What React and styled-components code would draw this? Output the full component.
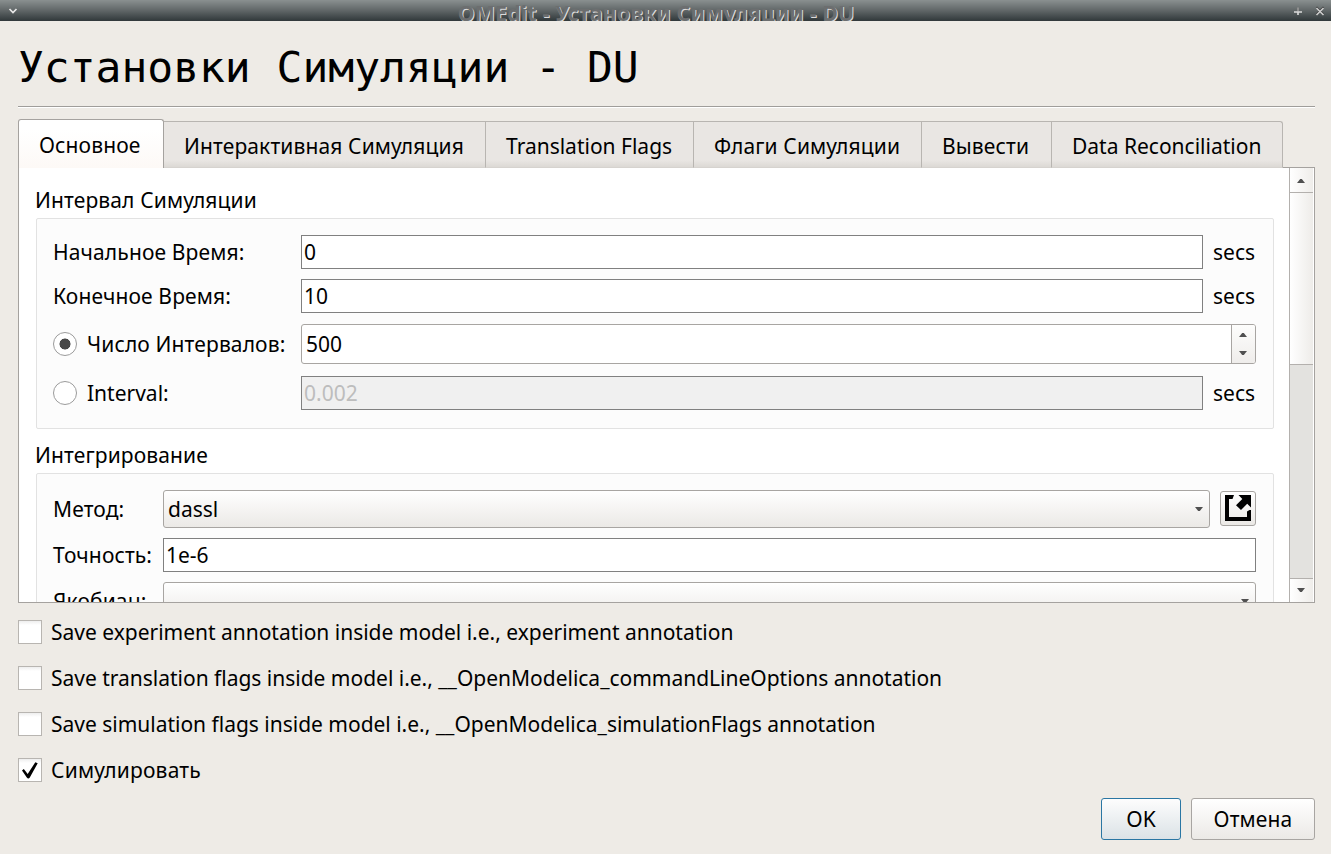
import React from "react";
import styled, { createGlobalStyle, css } from "styled-components";

const GlobalStyle = createGlobalStyle`
  * { box-sizing: border-box; }
  body { margin: 0; background: #eeebe6; }
`;

const Dialog = styled.div`
  width: 1331px;
  height: 854px;
  overflow: hidden;
  display: flex;
  flex-direction: column;
  background: #eeebe6;
  color: #000;
  font-family: "Noto Sans", sans-serif;
  font-size: 21px;
  line-height: 30px;
  white-space: nowrap;

  :lang(ru) { letter-spacing: 0.13px; }
`;

const TitleBar = styled.header`
  flex: none;
  height: 21px;
  display: flex;
  align-items: center;
  padding: 0 6px 0 8px;
  overflow: hidden;
  background: linear-gradient(#8a9090, #606667 50%, #30383a);
`;

const TitleText = styled.div`
  flex: 1;
  height: 21px;
  padding-left: 1px;
  font-size: 21.33px;
  font-weight: 700;
  letter-spacing: 0.15px;
  line-height: 25px;
  text-align: center;
  color: #6c6e6f;
  text-shadow: 1px 1px 0 #dcdcdc;
`;

const WindowButtons = styled.div`
  display: flex;
  gap: 12px;
`;

const Content = styled.main`
  flex: 1;
  display: flex;
  flex-direction: column;
  padding: 19px 16px 14px 18px;
`;

const Heading = styled.h1`
  flex: none;
  margin: 0;
  height: 67px;
  font: 400 43px/54px "DejaVu Sans Mono", monospace;
  border-bottom: 1px solid #9f9d9a;
  box-shadow: 0 1px 0 #fff;

  &:lang(ru) { letter-spacing: -0.03px; }
`;

const TabBar = styled.nav`
  flex: none;
  display: flex;
  align-items: flex-end;
  height: 49px;
  margin: 12px 0 -1px;
  position: relative;
  z-index: 1;
`;

const Tab = styled.div`
  width: ${(p) => p.$width}px;
  height: 47px;
  padding-left: 20px;
  line-height: 48px;
  border: 1px solid #b8b5b1;
  border-left: 0;
  border-bottom-color: #d6d3cf;
  background: linear-gradient(#e9e6e3 85%, #dcd9d5);
  &:last-child { border-radius: 0 3px 0 0; }
  ${(p) =>
    p.$active &&
    css`
      height: 49px;
      line-height: 50px;
      border: 1px solid #a5a29f;
      border-bottom: 0;
      border-radius: 3px 3px 0 0;
      background: linear-gradient(#fff 20%, #fdf9f6);
    `}
`;

const Panel = styled.section`
  flex: none;
  height: 436px;
  display: flex;
  border: 1px solid #a5a29f;
  background: #fff;
  overflow: hidden;
`;

const ScrollArea = styled.div`
  flex: 1;
  overflow: hidden;
  padding: 15px 15px 0 17px;
`;

const GroupTitle = styled.h2`
  margin: 0 0 0 -1px;
  height: ${(p) => p.$height}px;
  padding-top: ${(p) => p.$top}px;
  font: inherit;
`;

const GroupBox = styled.div`
  display: flex;
  flex-direction: column;
  gap: 10px;
  height: 211px;
  padding: 16px 17px 0 16px;
  margin-bottom: 10px;
  border: 1px solid #e2e2e2;
  border-radius: 2px;
  background: #fcfcfc;
`;

const Row = styled.div`
  display: flex;
  align-items: center;
  flex: none;
  margin-top: ${(p) => p.$top || 0}px;
`;

const Label = styled.label`
  flex: none;
  display: flex;
  align-items: center;
  gap: 10px;
  width: ${(p) => p.$width}px;
`;

const Radio = styled.span`
  width: 24px;
  height: 24px;
  border: 1px solid #9b9b9b;
  border-radius: 50%;
  background: ${(p) =>
    p.$checked ? "radial-gradient(circle, #484848 5.2px, #fff 5.8px)" : "#fff"};
`;

const Field = styled.div`
  flex: 1;
  height: 34px;
  padding-left: 2px;
  line-height: 32px;
  border: 1px solid #808080;
  background: ${(p) => (p.$disabled ? "#f0f0f0" : "#fff")};
  color: ${(p) => (p.$disabled ? "#bdbdbd" : "inherit")};
`;

const Unit = styled.span`
  width: 43px;
  margin-left: 10px;
`;

const SpinBox = styled.div`
  flex: 1;
  display: flex;
  height: 40px;
  padding-left: 4px;
  line-height: 38px;
  border: 1px solid #a8a5a2;
  border-radius: 3px;
  background: #fff;
`;

const SpinButtons = styled.div`
  width: 24px;
  margin-left: auto;
  display: flex;
  flex-direction: column;
  align-items: center;
  justify-content: center;
  gap: 14px;
  padding-right: 1px;
  border-left: 1px solid #a8a5a2;
  border-radius: 0 2px 2px 0;
  background: linear-gradient(#fdfdfc, #efedeb);
`;

const Arrow = styled.i`
  width: 8px;
  height: 4px;
  background: #505050;
  clip-path: ${(p) =>
    p.$up
      ? "polygon(40% 0, 60% 0, 100% 100%, 0 100%)"
      : "polygon(0 0, 100% 0, 60% 100%, 40% 100%)"};
`;

const raised = css`
  border: 1px solid #a8a5a2;
  border-radius: 3px;
  background: linear-gradient(#fff, #ebe9e6);
`;

const ComboBox = styled.div`
  ${raised}
  flex: 1;
  display: flex;
  align-items: center;
  justify-content: space-between;
  height: 38px;
  padding: 0 6px 0 4px;
`;

const ToolButton = styled.button`
  ${raised}
  width: 36px;
  height: 35px;
  margin: 0 0 1px 10px;
  padding: 3px 0 0 4px;
  display: flex;
`;

const ScrollBar = styled.div`
  width: 25px;
  display: flex;
  flex-direction: column;
  padding-right: 1px;
  border-left: 1px solid #b3b0ad;
`;

const ScrollButton = styled.div`
  height: ${(p) => p.$height}px;
  display: flex;
  align-items: center;
  justify-content: center;
  padding: ${(p) => (p.$up ? "2px 1px 0 0" : "0 1px 1px 0")};
  background: linear-gradient(90deg, #fff, #efedea);
`;

const ScrollThumb = styled.div`
  height: 173px;
  border: solid #b3b0ad;
  border-width: 1px 0;
  background: linear-gradient(90deg, #fff, #eeece9);
`;

const ScrollTrack = styled.div`
  flex: 1;
  border-bottom: 1px solid #b3b0ad;
  background: #e3e2df;
`;

const Options = styled.div`
  display: flex;
  flex-direction: column;
  gap: 16px;
  padding-top: 14px;
`;

const Option = styled.label`
  display: flex;
  align-items: center;
  gap: 9px;
  height: 30px;
  letter-spacing: -0.012px;

  &:lang(ru) { letter-spacing: 0.22px; }
`;

const CheckBox = styled.span`
  width: 24px;
  height: 24px;
  border: 1px solid #b8b5b1;
  background: linear-gradient(#eee, #fff 4px);
`;

const CheckMark = styled.svg`
  display: block;
`;

const Footer = styled.footer`
  display: flex;
  justify-content: flex-end;
  gap: 10px;
  margin-top: auto;
`;

const Button = styled.button`
  ${raised}
  width: ${(p) => p.$width}px;
  height: 42px;
  padding: 0;
  font: inherit;
  color: inherit;
  ${(p) =>
    p.$primary &&
    css`
      border-color: #2a76a3;
      background: linear-gradient(#fdfdfd, #dbe2e6);
    `}
`;

const TABS = [
  ["Основное", 146, "ru"],
  ["Интерактивная Симуляция", 322, "ru"],
  ["Translation Flags", 208, "en"],
  ["Флаги Симуляции", 228, "ru"],
  ["Вывести", 130, "ru"],
  ["Data Reconciliation", 231, "en"],
];

const OPTIONS = [
  ["Save experiment annotation inside model i.e., experiment annotation", "en"],
  ["Save translation flags inside model i.e., __OpenModelica_commandLineOptions annotation", "en"],
  ["Save simulation flags inside model i.e., __OpenModelica_simulationFlags annotation", "en"],
  ["Симулировать", "ru", true],
];

export default function App() {
  return (
    <Dialog>
      <GlobalStyle />
      <TitleBar>
        <svg width="10" height="8" viewBox="0 0 10 8">
          <path d="M1.500 2L5 5.500l3.500-3.500" fill="none" stroke="#e8e8e8" strokeWidth="1.700" />
        </svg>
        <TitleText>OMEdit - Установки Симуляции - DU</TitleText>
        <WindowButtons>
          <svg width="10" height="10" viewBox="0 0 10 10">
            <path d="M5 1.500v4" stroke="#8f8f8f" strokeWidth="2" />
            <path d="M1 6h8M5 6v3" stroke="#dcdcdc" strokeWidth="1.600" />
          </svg>
          <svg width="10" height="10" viewBox="0 0 10 10">
            <path d="M1.500 1l7 7M8.500 1l-7 7" stroke="#3c3c3c" strokeWidth="1.500" />
            <path d="M1.500 2l7 7M8.500 2l-7 7" stroke="#d0d0d0" strokeWidth="1.500" />
          </svg>
        </WindowButtons>
      </TitleBar>
      <Content>
        <Heading lang="ru">Установки Симуляции - DU</Heading>
        <TabBar>
          {TABS.map(([name, width, lang], i) => (
            <Tab key={name} lang={lang} $width={width} $active={i === 0}>{name}</Tab>
          ))}
        </TabBar>
        <Panel>
          <ScrollArea>
            <GroupTitle lang="ru" $height={35} $top={2}>Интервал Симуляции</GroupTitle>
            <GroupBox>
              <Row>
                <Label lang="ru" $width={248}>Начальное Время:</Label>
                <Field>0</Field>
                <Unit>secs</Unit>
              </Row>
              <Row>
                <Label lang="ru" $width={248}>Конечное Время:</Label>
                <Field>10</Field>
                <Unit>secs</Unit>
              </Row>
              <Row $top={1}>
                <Label lang="ru" $width={248}><Radio $checked />Число Интервалов:</Label>
                <SpinBox>
                  500
                  <SpinButtons><Arrow $up /><Arrow /></SpinButtons>
                </SpinBox>
              </Row>
              <Row $top={2}>
                <Label $width={248}><Radio />Interval:</Label>
                <Field $disabled>0.002</Field>
                <Unit>secs</Unit>
              </Row>
            </GroupBox>
            <GroupTitle lang="ru" $height={34} $top={1}>Интегрирование</GroupTitle>
            <GroupBox>
              <Row>
                <Label lang="ru" $width={110}>Метод:</Label>
                <ComboBox>dassl<Arrow /></ComboBox>
                <ToolButton aria-label="Open">
                  <svg width="26" height="26" viewBox="0 0 26 26">
                    <path d="M9 0H0v26h26V15h-1.500l-2.500 1.500V22H4V4h3.500z" />
                    <path d="M13.500 0H26v12.500l-3.800-3.800-6.200 6.300-5-4.800 6.300-6.200z" />
                  </svg>
                </ToolButton>
              </Row>
              <Row>
                <Label lang="ru" $width={110}>Точность:</Label>
                <Field>1e-6</Field>
              </Row>
              <Row>
                <Label lang="ru" $width={110}>Якобиан:</Label>
                <ComboBox><span /><Arrow /></ComboBox>
              </Row>
            </GroupBox>
          </ScrollArea>
          <ScrollBar>
            <ScrollButton $height={24} $up><Arrow $up /></ScrollButton>
            <ScrollThumb />
            <ScrollTrack />
            <ScrollButton $height={23}><Arrow /></ScrollButton>
          </ScrollBar>
        </Panel>
        <Options>
          {OPTIONS.map(([text, lang, checked]) => (
            <Option key={text} lang={lang}>
              <CheckBox>
                {checked && (
                  <CheckMark width="22" height="22" viewBox="0 0 22 22">
                    <path d="M3 11.500l1.800-1.500 3.900 5L16.300 3.300l2.400 1L10.800 18.500q-1.500 2-3 0z" />
                  </CheckMark>
                )}
              </CheckBox>
              {text}
            </Option>
          ))}
        </Options>
        <Footer>
          <Button $width={80} $primary>OK</Button>
          <Button lang="ru" $width={124}>Отмена</Button>
        </Footer>
      </Content>
    </Dialog>
  );
}
